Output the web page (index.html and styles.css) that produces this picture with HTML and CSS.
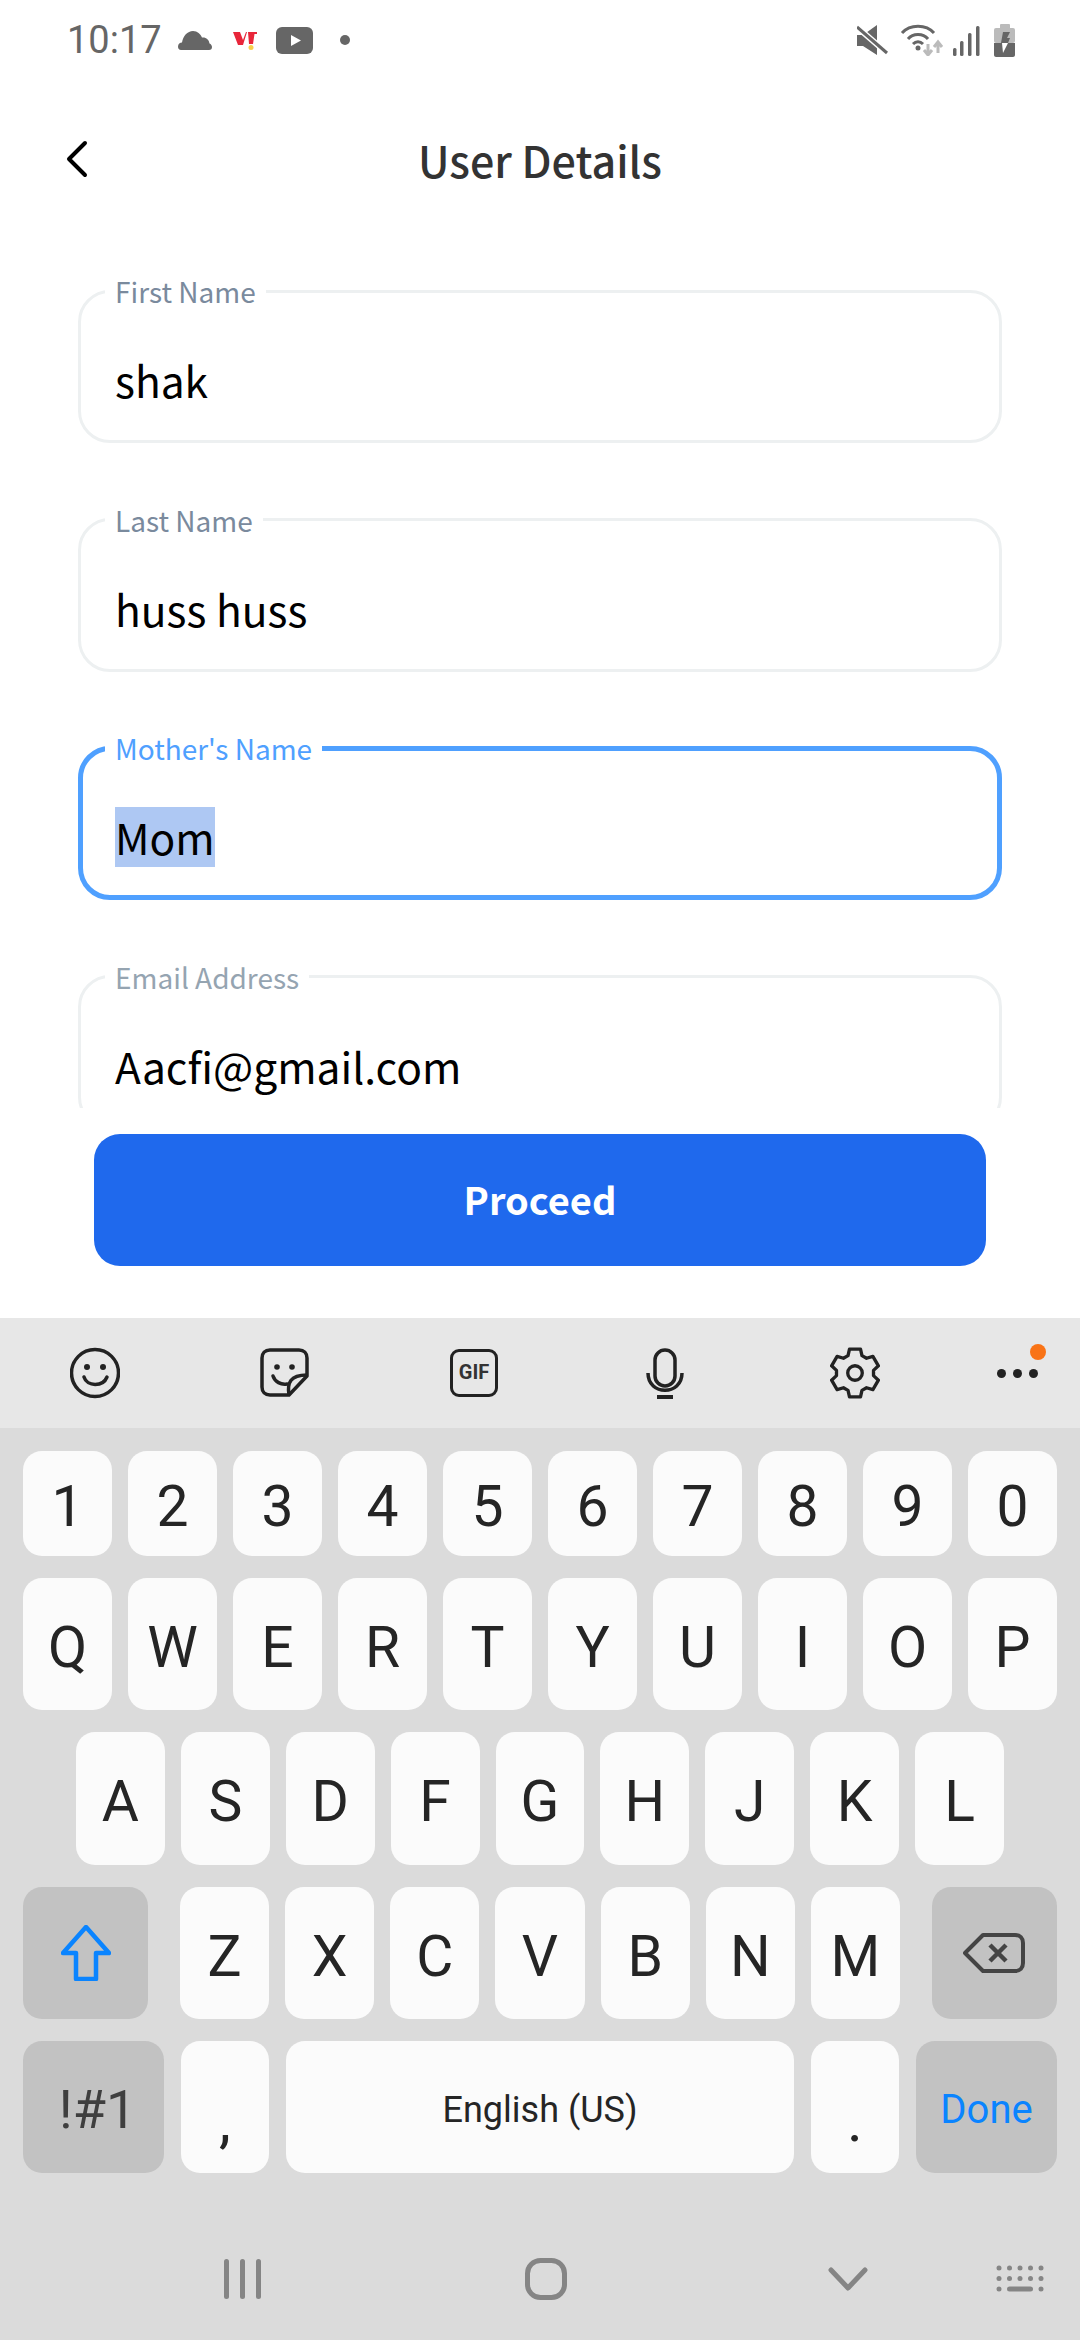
FILE: index.html
```html
<!DOCTYPE html>
<html lang="en">
<head>
	<meta charset="UTF-8">
	<title>User Details</title>
	<link rel="stylesheet" href="styles.css">
</head>
<body>
<div class="page">
	<div class="status">
		<div class="status-left">
			<span class="time">10:17</span>
			<svg class="ic-cloud" width="34" height="19" viewBox="0 0 34 19"><path fill="#666" d="M3 19C1 19 0 17.500 0 15.500C0 13 2 11.500 4 11.500C5 5 9.500 0 15 0C19.500 0 22.500 3 24 6.500C28 6 31 8.500 31.500 12.500C33 13 34 14.500 34 16C34 18 33 19 31 19Z"/></svg>
			<svg class="ic-vi" width="24" height="19" viewBox="0 0 24 19"><polygon fill="#e8263a" points="0,1 7,1 10,9 13,1 14,1 10,14 5,14"/><polygon fill="#e8263a" points="15,1 24,1 24,3 21.500,3 20,13 16,13"/><circle fill="#f7d04a" cx="18" cy="16.500" r="2.500"/></svg>
			<svg class="ic-yt" width="37" height="27" viewBox="0 0 37 27"><rect fill="#666" width="37" height="27" rx="6"/><polygon fill="#fff" points="15,8 15,19 25,13.500"/></svg>
			<i class="status-dot"></i>
		</div>
		<div class="status-right">
			<svg width="31" height="31" viewBox="0 0 31 31"><path fill="#666" d="M0 10H6L20 0V30L6 21H0Z"/><path stroke="#fff" stroke-width="6" d="M0 2L30 28"/><path stroke="#666" stroke-width="3" d="M0 2L30 28"/></svg>
			<svg class="ic-wifi" width="46" height="32" viewBox="0 0 46 32" fill="none"><path stroke="#666" stroke-width="3" d="M2 9C10 0 26 0 34 9"/><path stroke="#666" stroke-width="3" d="M8 15C13 9 23 9 28 15"/><path stroke="#666" stroke-width="3" d="M13 20C16 17 20 17 23 20"/><circle fill="#666" cx="18" cy="24" r="2.500"/><path stroke="#bbb" stroke-width="3" d="M28 20V30M24 26L28 31L32 26"/><path stroke="#bbb" stroke-width="3" d="M38 29V19M34 23L38 18L42 23"/></svg>
			<svg class="ic-signal" width="27" height="30" viewBox="0 0 27 30"><g fill="#666"><rect x="0" y="22" width="3.500" height="8" rx="1.500"/><rect x="7" y="15" width="3.500" height="15" rx="1.500"/><rect x="15" y="7" width="3.500" height="23" rx="1.500"/><rect x="23" y="0" width="3.500" height="30" rx="1.500"/></g></svg>
			<svg class="ic-battery" width="21" height="33" viewBox="0 0 21 33"><rect fill="#bbb" x="6" width="10" height="5" rx="1"/><rect fill="#bbb" y="4" width="21" height="15" rx="2"/><path fill="#666" d="M0 19H21V31C21 32 20 33 19 33H2C1 33 0 32 0 31Z"/><polygon fill="#666" points="9,8 16,8 13,14 16,14 14,19 7,19"/><polygon fill="#fff" points="8,19 14,19 9,29"/></svg>
		</div>
	</div>

	<div class="header">
		<svg class="back" width="22" height="38" viewBox="0 0 22 38" fill="none"><path stroke="#000" stroke-width="4" stroke-linecap="round" stroke-linejoin="round" d="M19 3L3 19L19 35"/></svg>
		<h1 class="title">User Details</h1>
	</div>

	<div class="form">
		<fieldset class="field">
			<legend>First Name</legend>
			<div class="value">shak</div>
		</fieldset>
		<fieldset class="field">
			<legend>Last Name</legend>
			<div class="value">huss huss</div>
		</fieldset>
		<fieldset class="field field-focus">
			<legend>Mother's Name</legend>
			<div class="value"><span class="selected">Mom</span></div>
		</fieldset>
		<fieldset class="field field-faded">
			<legend>Email Address</legend>
			<div class="value">Aacfi@gmail.com</div>
		</fieldset>
	</div>

	<button class="proceed">Proceed</button>

	<div class="keyboard">
		<div class="toolbar">
			<svg width="50" height="52" viewBox="0 0 50 52" fill="none"><circle cx="25" cy="26" r="23.500" stroke="#222" stroke-width="3.500"/><circle cx="17" cy="20" r="3" fill="#222"/><circle cx="33" cy="20" r="3" fill="#222"/><path stroke="#222" stroke-width="3.500" stroke-linecap="round" d="M14 30C17 40 33 40 37 30"/></svg>
			<svg width="50" height="50" viewBox="0 0 50 50" fill="none"><path stroke="#222" stroke-width="3.500" stroke-linejoin="round" d="M10 2H39C44 2 47 5 47 10V28L29 47H10C5 47 2 44 2 39V10C2 5 5 2 10 2Z"/><circle cx="17" cy="19" r="2.800" fill="#222"/><circle cx="32" cy="19" r="2.800" fill="#222"/><path stroke="#222" stroke-width="3.500" stroke-linecap="round" d="M13 28C15 34 21 37 27 36"/><path stroke="#222" stroke-width="3.500" stroke-linejoin="round" d="M29 47C27 35 30 27 47 27"/></svg>
			<div class="gif">GIF</div>
			<svg class="tool-mic" width="38" height="51" viewBox="0 0 38 51" fill="none"><rect x="9" y="2" width="20" height="36" rx="10" stroke="#222" stroke-width="3.500"/><path stroke="#222" stroke-width="3.500" d="M2 25C2 48 36 48 36 25"/><rect x="11" y="47" width="16" height="4" fill="#222"/></svg>
			<svg class="tool-gear" width="50" height="52" viewBox="0 0 48 50" fill="none"><polygon stroke="#222" stroke-width="3.200" stroke-linejoin="round" points="18.700,2.100 29.300,2.100 30.700,8.300 35.100,10.800 41.200,9 46.500,18.100 41.800,22.500 41.800,27.500 46.500,31.900 41.200,41 35.100,39.200 30.700,41.700 29.300,47.900 18.700,47.900 17.300,41.700 12.900,39.200 6.800,41 1.500,31.900 6.200,27.500 6.200,22.500 1.500,18.100 6.800,9 12.900,10.800 17.300,8.300"/><circle cx="24" cy="25" r="7" stroke="#222" stroke-width="3.200"/></svg>
			<div class="more">
				<i></i><i></i><i></i>
				<b class="badge"></b>
			</div>
		</div>

		<div class="rows">
			<div class="row">
				<div class="key">1</div><div class="key">2</div><div class="key">3</div><div class="key">4</div><div class="key">5</div><div class="key">6</div><div class="key">7</div><div class="key">8</div><div class="key">9</div><div class="key">0</div>
			</div>
			<div class="row row-tall">
				<div class="key">Q</div><div class="key">W</div><div class="key">E</div><div class="key">R</div><div class="key">T</div><div class="key">Y</div><div class="key">U</div><div class="key">I</div><div class="key">O</div><div class="key">P</div>
			</div>
			<div class="row row-tall row-home">
				<div class="key">A</div><div class="key">S</div><div class="key">D</div><div class="key">F</div><div class="key">G</div><div class="key">H</div><div class="key">J</div><div class="key">K</div><div class="key">L</div>
			</div>
			<div class="row row-tall">
				<div class="key key-fn key-shift">
					<svg width="50" height="56" viewBox="0 0 50 56" fill="none"><path stroke="#0a84ff" stroke-width="4.500" stroke-linejoin="round" d="M25 2L48 28H35V54H15V28H2Z"/></svg>
				</div>
				<div class="key">Z</div><div class="key">X</div><div class="key">C</div><div class="key">V</div><div class="key">B</div><div class="key">N</div><div class="key">M</div>
				<div class="key key-fn key-del">
					<svg width="62" height="40" viewBox="0 0 62 40" fill="none"><path stroke="#444" stroke-width="4" stroke-linejoin="round" d="M20 2H52C57 2 60 5 60 10V30C60 35 57 38 52 38H20L2 20Z"/><path stroke="#444" stroke-width="4.500" d="M27 12L43 28M43 12L27 28"/></svg>
				</div>
			</div>
			<div class="row row-tall row-bottom">
				<div class="key key-fn key-sym">!#1</div>
				<div class="key key-punct">,</div>
				<div class="key key-space">English (US)</div>
				<div class="key key-punct">.</div>
				<div class="key key-fn key-done">Done</div>
			</div>
		</div>

		<div class="nav">
			<svg width="37" height="40" viewBox="0 0 37 40"><g fill="#858585"><rect width="5" height="40" rx="2.500"/><rect x="16" width="5" height="40" rx="2.500"/><rect x="32" width="5" height="40" rx="2.500"/></g></svg>
			<svg width="42" height="42" viewBox="0 0 42 42" fill="none"><rect x="2.500" y="2.500" width="37" height="37" rx="13" stroke="#858585" stroke-width="5"/></svg>
			<svg width="40" height="24" viewBox="0 0 40 24" fill="none"><path stroke="#858585" stroke-width="5" stroke-linecap="round" stroke-linejoin="round" d="M3 3L20 21L37 3"/></svg>
			<svg width="48" height="27" viewBox="0 0 48 27"><g fill="#858585"><circle cx="3" cy="3" r="2.500"/><circle cx="13.500" cy="3" r="2.500"/><circle cx="24" cy="3" r="2.500"/><circle cx="34.500" cy="3" r="2.500"/><circle cx="45" cy="3" r="2.500"/><circle cx="3" cy="13.500" r="2.500"/><circle cx="13.500" cy="13.500" r="2.500"/><circle cx="24" cy="13.500" r="2.500"/><circle cx="34.500" cy="13.500" r="2.500"/><circle cx="45" cy="13.500" r="2.500"/><circle cx="3" cy="24" r="2.500"/><rect x="11" y="21.500" width="26" height="5" rx="2.500"/><circle cx="45" cy="24" r="2.500"/></g></svg>
		</div>
	</div>
</div>
</body>
</html>
```

FILE: styles.css
```css
*{margin:0; padding:0; box-sizing:border-box;}
html,body{width:1080px; height:2340px; overflow:hidden; background:#fff;}
svg{display:block; flex:none;}

.page{width:1080px; height:2340px; display:flex; flex-direction:column; font-family:"Noto Sans CJK SC","Noto Sans",sans-serif;}

/* status bar */
.status{height:80px; padding:0 65px 0 67px; display:flex; justify-content:space-between; align-items:center;}
.status-left{display:flex; align-items:center; gap:16px;}
.status-right{display:flex; align-items:center;}
.time{font:38px/80px Roboto,sans-serif; color:#666; width:95px;}
.ic-vi{margin-left:5px;}
.ic-yt{margin-left:3px;}
.status-dot{width:10px; height:10px; border-radius:50%; background:#666; margin-left:11px;}
.ic-wifi{margin-left:12px;}
.ic-signal{margin-left:7px; margin-top:2px;}
.ic-battery{margin-left:14px;}

/* header */
.header{height:160px; padding:0 66px; display:flex; align-items:center;}
.back{margin-top:-2px;}
.title{flex:1; margin:-2px 22px 0 0; text-align:center; font-size:43px; font-weight:500; color:#333; line-height:60px;}

/* fields */
.form{height:837px; margin-top:31px; padding:0 78px; overflow:hidden; display:flex; flex-direction:column; gap:56.5px;}
.field{flex:none; height:172px; border:3px solid #edf0f1; border-radius:32px; padding:0 34px; min-width:0;}
.field legend{margin-left:-10px; padding:0 10px; font-size:28px; line-height:40px; color:#7a8a9d;}
.value{margin-top:39px; font-size:42.5px; line-height:60px; color:#000;}
.field-focus{border:5px solid #4fa0ff; padding:0 32px;}
.field-focus legend{color:#4fa0ff;}
.field-faded legend{color:#95a4b1;}
.selected{display:inline-block; background:#aec8f3;}

.proceed{flex:none; width:892px; height:132px; margin:26px 0 0 94px; padding-bottom:3px; border:0; border-radius:26px; background:#1f69ed; color:#fff; font-family:inherit; font-size:38px; font-weight:700;}

/* keyboard */
.keyboard{margin-top:auto; height:1022px; background:#dbdbdb; font-family:Roboto,sans-serif; color:#252525;}
.toolbar{height:110px; background:#e7e7e7; padding:0 0 0 70px; display:flex; align-items:center; gap:140px;}
.gif{width:48px; height:48px; border:3.5px solid #222; border-radius:9px; font-size:20px; font-weight:700; line-height:41px; text-align:center; color:#333; flex:none;}
.tool-mic{margin-left:8px;}
.tool-gear{margin-left:6px;}
.more{position:relative; display:flex; gap:7px; margin-left:-23px;}
.more i{width:9px; height:9px; border-radius:50%; background:#222;}
.badge{position:absolute; right:-8px; top:-25px; width:16px; height:16px; border-radius:50%; background:#f97316;}

.rows{padding:23px 23px 0; display:flex; flex-direction:column; gap:22px;}
.row{height:105px; display:flex; gap:16px;}
.row-tall{height:132px;}
.row-home{padding:0 53px; height:133px;}
.row-bottom{gap:17px;}
.key{flex:1; border-radius:19px; background:#fbfbfb; font-size:57px; display:flex; align-items:center; justify-content:center; padding-top:6px;}
.key-fn{background:#c2c2c2; padding-top:0;}
.key-shift{flex:none; width:125px; margin-right:16px;}
.key-del{flex:none; width:125px; margin-left:16px;}
.key-sym{flex:none; width:141px; font-size:54px; color:#3f3f3f; padding:5px 0 0 8px;}
.key-done{flex:none; width:141px; font-size:40px; color:#0a84ff; padding-top:5px;}
.key-space{flex:none; width:508px; font-size:36px; padding-top:5px;}
.key-punct{flex:none; width:88px; padding-top:26px; font-size:60px;}

.nav{height:167px; padding:44px 0 0 224px; display:flex; align-items:center;}
.nav svg:nth-child(2){margin-left:264px;}
.nav svg:nth-child(3){margin-left:261px;}
.nav svg:nth-child(4){margin-left:128px;}
```
